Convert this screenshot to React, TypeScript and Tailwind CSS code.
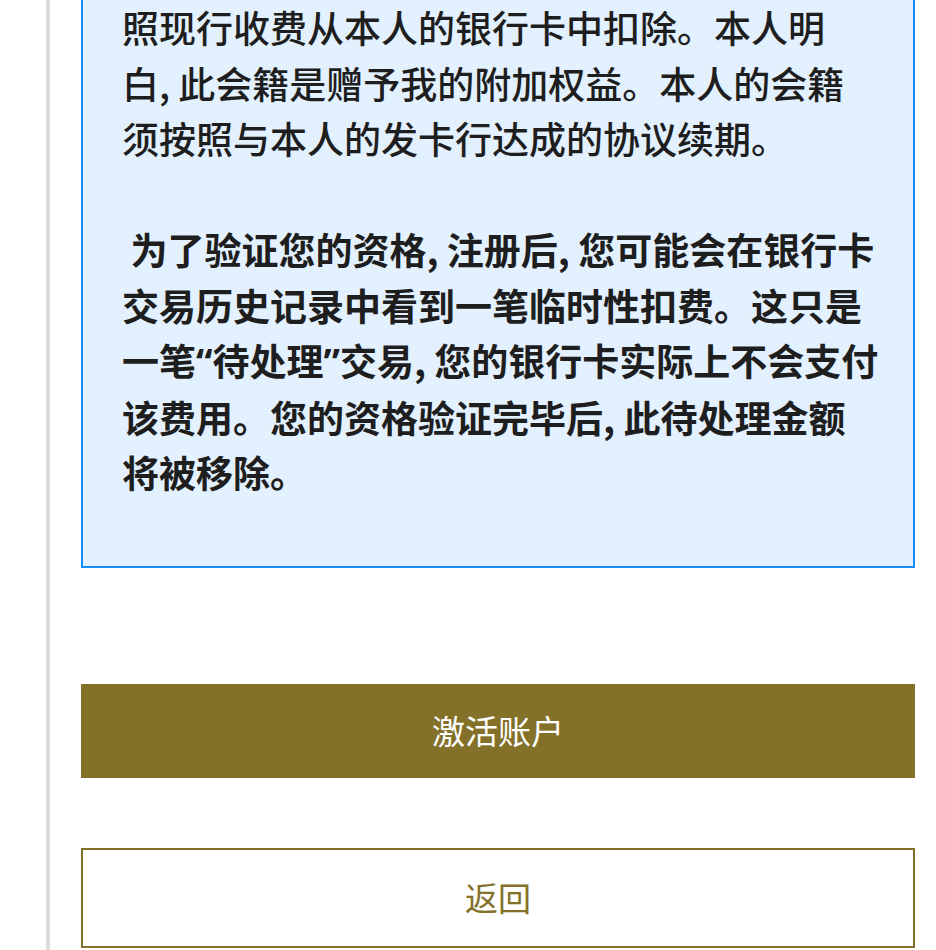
import React from 'react';

const para1 = [
  '照现行收费从本人的银行卡中扣除。本人明',
  '白, 此会籍是赠予我的附加权益。本人的会籍',
  '须按照与本人的发卡行达成的协议续期。',
];

// narrow latin quotes, as in the reference
const Q = ({ c }: { c: string }) => (
  <span style={{ fontFamily: '"Noto Sans", "Liberation Sans", sans-serif' }}>{c}</span>
);

export default function App() {
  return (
    <div
      className="w-[936px] h-[950px] overflow-hidden bg-white"
      style={{ fontFamily: '"Noto Sans CJK SC", "Noto Sans", sans-serif' }}
    >
      <div className="ml-[46px] h-full border-l-[4px] border-[#dadada] pl-[31px] pr-[21px]">
        {/* terms box */}
        <div className="border-2 border-t-0 border-[#148cff] bg-[#e3f1fe] pl-[39px] pr-[20px] pb-[65px] text-[37px] leading-[55.5px] text-[#1e1e1e]">
          <div className="font-medium">
            {para1.map((l) => (
              <div key={l} className="whitespace-pre">{l}</div>
            ))}
          </div>
          <div className="h-[55.5px]" />
          <div className="font-bold">
            <div className="whitespace-pre"> 为了验证您的资格, 注册后, 您可能会在银行卡</div>
            <div className="whitespace-pre">交易历史记录中看到一笔临时性扣费。这只是</div>
            <div className="whitespace-pre">
              一笔<Q c="“" />待处理<Q c="”" />交易, 您的银行卡实际上不会支付
            </div>
            <div className="whitespace-pre">该费用。您的资格验证完毕后, 此待处理金额</div>
            <div className="whitespace-pre">将被移除。</div>
          </div>
        </div>

        <button className="mt-[116px] flex h-[94px] w-full items-center justify-center bg-[#837029] text-[33px] text-white">
          激活账户
        </button>

        <button className="mt-[70px] flex h-[100px] w-full items-center justify-center border-2 border-[#837029] bg-white text-[33px] text-[#837029]">
          返回
        </button>
      </div>
    </div>
  );
}
